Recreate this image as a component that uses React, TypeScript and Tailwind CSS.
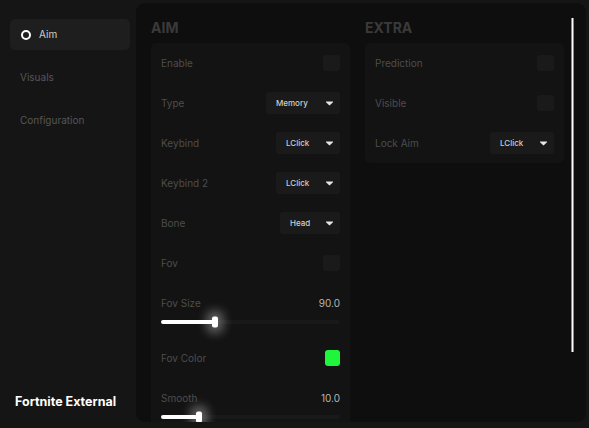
import React from "react";

const font = { fontFamily: "Inter, 'Liberation Sans', sans-serif" };

const Arrow = () => (
  <svg width="7" height="5" viewBox="0 0 7 5" className="shrink-0">
    <path d="M0 0.5h7v0.8L3.5 4.6 0 1.3z" fill="#e6e6e6" />
  </svg>
);

const Row = ({ label, children }: { label: string; children?: React.ReactNode }) => (
  <div className="h-[40px] shrink-0 flex items-center justify-between">
    <span className="text-[10px] text-[#4d4d4d]">{label}</span>
    {children}
  </div>
);

const Check = () => <div className="w-[17px] h-[16px] rounded-[3px] bg-[#1a1a1a]" />;

const Select = ({ value, w }: { value: string; w: string }) => (
  <div className={`${w} h-[22px] rounded-[3px] bg-[#1a1a1a] flex items-center justify-between pl-[10px] pr-[7px]`}>
    <span className="text-[8px] font-medium text-[#cfcfcf]">{value}</span>
    <Arrow />
  </div>
);

const Slider = ({ label, value, pct }: { label: string; value: string; pct: number }) => (
  <div className="shrink-0 pt-[13px] pb-[14px]">
    <div className="flex items-center justify-between h-[14px]">
      <span className="text-[10px] text-[#4d4d4d]">{label}</span>
      <span className="text-[10px] text-[#b5b5b5]">{value}</span>
    </div>
    <div className="mt-[10px] relative h-[4px] rounded-full bg-[#191919]">
      <div className="h-full rounded-full bg-white" style={{ width: `${pct}%` }} />
      <div
        className="absolute top-1/2 -translate-y-1/2 -translate-x-1/2 w-[6px] h-[11px] rounded-[2px] bg-white shadow-[0_0_10px_6px_rgba(255,255,255,0.3)]"
        style={{ left: `${pct}%` }}
      />
    </div>
  </div>
);

export default function App() {
  return (
    <div className="w-[589px] h-[428px] flex bg-[#151515] overflow-hidden" style={font}>
      <div className="w-[136px] shrink-0 flex flex-col justify-between pt-[19px] pb-[16px] pl-[10px] pr-[6px]">
        <div className="flex flex-col">
          <div className="h-[31px] rounded-[5px] bg-[#1e1e1e] flex items-center pl-[11px] gap-[8px]">
            <div className="w-[10px] h-[10px] rounded-full border-2 border-white" />
            <span className="text-[10px] text-[#cfcfcf]">Aim</span>
          </div>
          <div className="mt-[20px] leading-[14px] pl-[10px] text-[10px] text-[#555]">Visuals</div>
          <div className="mt-[29px] leading-[14px] pl-[10px] text-[10px] text-[#555]">Configuration</div>
        </div>
        <div className="pl-[5px] text-[12.5px] font-bold text-white">Fortnite External</div>
      </div>

      <div className="relative flex-1 mt-[3px] mb-[6px] mr-[3px] rounded-[9px] bg-[#0e0e0e] overflow-hidden pl-[15px] pt-[16px] flex items-start gap-[15px]">
        <div className="w-[199px] shrink-0 flex flex-col">
          <div className="shrink-0 text-[14px] font-bold text-[#3a3a3a] h-[24px] leading-[17px]">AIM</div>
          <div className="shrink-0 rounded-[5px] bg-[#131313] px-[10px]">
            <Row label="Enable"><Check /></Row>
            <Row label="Type"><Select value="Memory" w="w-[74px]" /></Row>
            <Row label="Keybind"><Select value="LClick" w="w-[64px]" /></Row>
            <Row label="Keybind 2"><Select value="LClick" w="w-[64px]" /></Row>
            <Row label="Bone"><Select value="Head" w="w-[60px]" /></Row>
            <Row label="Fov"><Check /></Row>
            <Slider label="Fov Size" value="90.0" pct={30} />
            <Row label="Fov Color">
              <div className="w-[15px] h-[16px] rounded-[3px] bg-[#1ff53a]" />
            </Row>
            <Slider label="Smooth" value="10.0" pct={21} />
          </div>
        </div>

        <div className="w-[199px] shrink-0 flex flex-col">
          <div className="text-[14px] font-bold text-[#3a3a3a] h-[24px] leading-[17px]">EXTRA</div>
          <div className="rounded-[5px] bg-[#131313] px-[10px]">
            <Row label="Prediction"><Check /></Row>
            <Row label="Visible"><Check /></Row>
            <Row label="Lock Aim"><Select value="LClick" w="w-[64px]" /></Row>
          </div>
        </div>

        <div className="absolute left-[435px] top-[15px] w-[3px] h-[334px] bg-white border-x border-[#888]" />
      </div>
    </div>
  );
}
